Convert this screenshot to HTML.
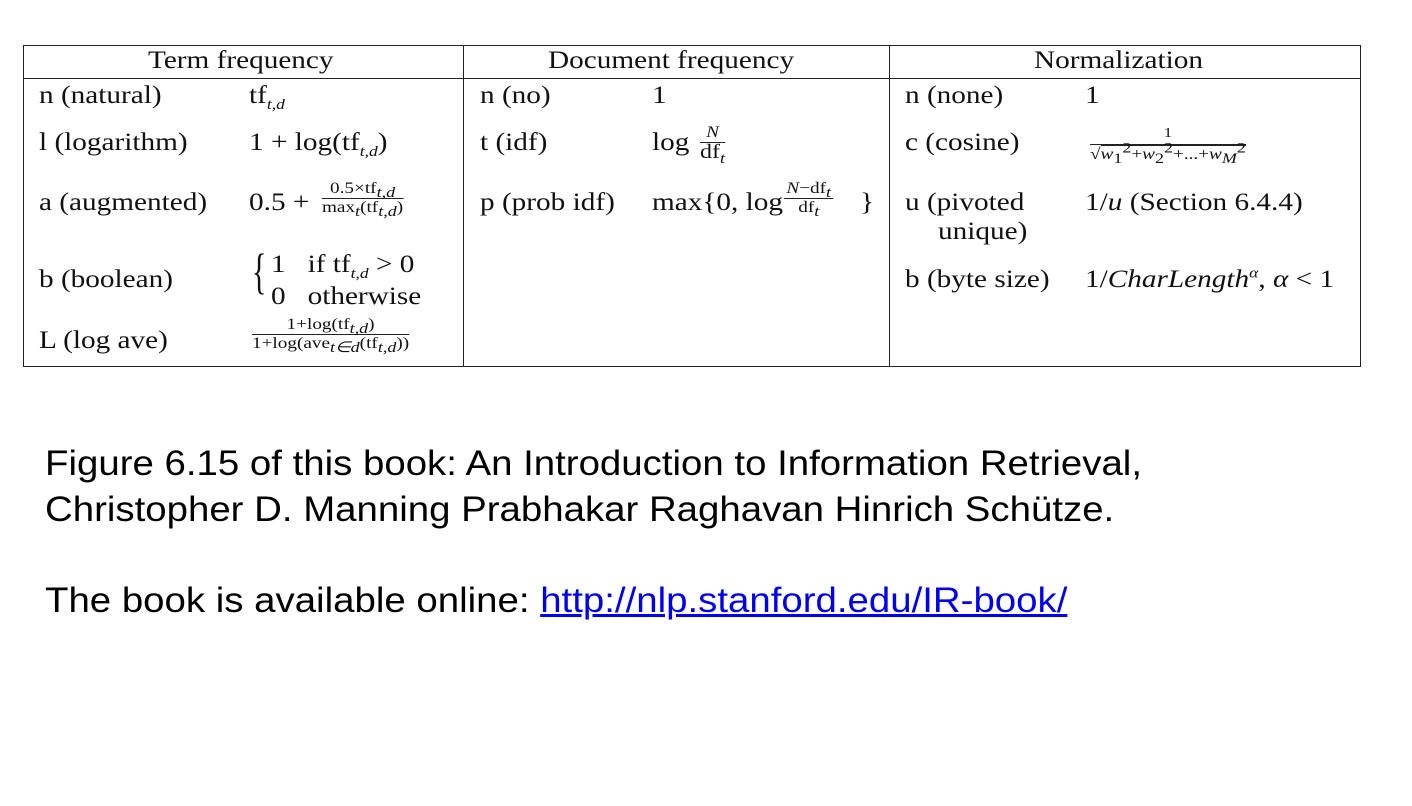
<!DOCTYPE html>
<html><head><meta charset="utf-8"><style>
body{margin:0;width:1412px;height:806px;background:#fff;position:relative;overflow:hidden;font-family:"Liberation Serif",serif;color:#111}
.a{position:absolute;font-size:25px;line-height:24px;white-space:nowrap;transform:scaleX(1.17);transform-origin:left top}
.l{position:absolute;background:#222}
i{font-style:italic}
sub,sup{font-size:15px;line-height:0}
.fr{position:absolute;text-align:center;font-size:16px;line-height:18px;white-space:nowrap;transform:scaleX(1.2);transform-origin:left top}
.fr .n{border-bottom:1px solid #222;padding:0 2px}
.c{position:absolute;font-family:"Liberation Sans",sans-serif;font-size:35px;line-height:35px;color:#000;white-space:nowrap;transform:scaleX(1.097);transform-origin:left top}
</style></head><body>
<div class="l" style="left:23px;top:45px;width:1338px;height:1px"></div>
<div class="l" style="left:23px;top:78px;width:1338px;height:1px"></div>
<div class="l" style="left:23px;top:366px;width:1338px;height:1px"></div>
<div class="l" style="left:23px;top:45px;width:1px;height:322px"></div>
<div class="l" style="left:463px;top:45px;width:1px;height:322px"></div>
<div class="l" style="left:889px;top:45px;width:1px;height:322px"></div>
<div class="l" style="left:1360px;top:45px;width:1px;height:322px"></div>

<div class="a" style="left:148px;top:49px">Term frequency</div>
<div class="a" style="left:548px;top:49px">Document frequency</div>
<div class="a" style="left:1034px;top:49px">Normalization</div>

<div class="a" style="left:39px;top:84px">n (natural)</div>
<div class="a" style="left:249px;top:84px">tf<sub><i>t,d</i></sub></div>
<div class="a" style="left:39px;top:131px">l (logarithm)</div>
<div class="a" style="left:249px;top:131px">1 + log(tf<sub><i>t,d</i></sub>)</div>
<div class="a" style="left:39px;top:191px">a (augmented)</div>
<div class="a" style="left:249px;top:191px">0.5 +</div>
<div class="fr" style="left:322px;top:180px"><div class="n">0.5×tf<sub><i>t,d</i></sub></div><div>max<sub><i>t</i></sub>(tf<sub><i>t,d</i></sub>)</div></div>
<div class="a" style="left:39px;top:268px">b (boolean)</div>
<div class="a" style="left:252px;top:246px;font-size:50px;line-height:50px;transform:scaleX(.6)">{</div>
<div class="a" style="left:271px;top:253px">1&nbsp;&nbsp;&nbsp;if tf<sub><i>t,d</i></sub> &gt; 0</div>
<div class="a" style="left:271px;top:285px">0&nbsp;&nbsp;&nbsp;otherwise</div>
<div class="a" style="left:39px;top:329px">L (log ave)</div>
<div class="fr" style="left:252px;top:316px"><div class="n">1+log(tf<sub><i>t,d</i></sub>)</div><div>1+log(ave<sub><i>t∈d</i></sub>(tf<sub><i>t,d</i></sub>))</div></div>

<div class="a" style="left:480px;top:84px">n (no)</div>
<div class="a" style="left:652px;top:84px">1</div>
<div class="a" style="left:480px;top:131px">t (idf)</div>
<div class="a" style="left:652px;top:131px">log</div>
<div class="fr" style="left:700px;top:124px"><div class="n"><i>N</i></div><div style="font-size:20px">df<sub><i>t</i></sub></div></div>
<div class="a" style="left:480px;top:191px">p (prob idf)</div>
<div class="a" style="left:652px;top:191px">max{0, log</div>
<div class="fr" style="left:784px;top:180px"><div class="n"><i>N</i>−df<sub><i>t</i></sub></div><div>df<sub><i>t</i></sub></div></div>
<div class="a" style="left:860px;top:191px">}</div>

<div class="a" style="left:905px;top:84px">n (none)</div>
<div class="a" style="left:1085px;top:84px">1</div>
<div class="a" style="left:905px;top:131px">c (cosine)</div>
<div class="fr" style="left:1090px;top:124px;line-height:20px"><div class="n" style="font-size:14px">1</div><div>√<span style="border-top:1px solid #222"><i>w</i><sub>1</sub><sup>2</sup>+<i>w</i><sub>2</sub><sup>2</sup>+...+<i>w</i><sub><i>M</i></sub><sup>2</sup></span></div></div>
<div class="a" style="left:905px;top:191px">u (pivoted</div>
<div class="a" style="left:938px;top:220px">unique)</div>
<div class="a" style="left:1085px;top:191px">1/<i>u</i> (Section 6.4.4)</div>
<div class="a" style="left:905px;top:268px">b (byte size)</div>
<div class="a" style="left:1085px;top:268px">1/<i>CharLength</i><sup><i>α</i></sup>, <i>α</i> &lt; 1</div>

<div class="c" style="left:45px;top:446px">Figure 6.15 of this book: An Introduction to Information Retrieval,</div>
<div class="c" style="left:45px;top:492px">Christopher D. Manning Prabhakar Raghavan Hinrich Schütze.</div>
<div class="c" style="left:45px;top:583px">The book is available online: <span style="color:#0000ee;text-decoration:underline">http://nlp.stanford.edu/IR-book/</span></div>
</body></html>
